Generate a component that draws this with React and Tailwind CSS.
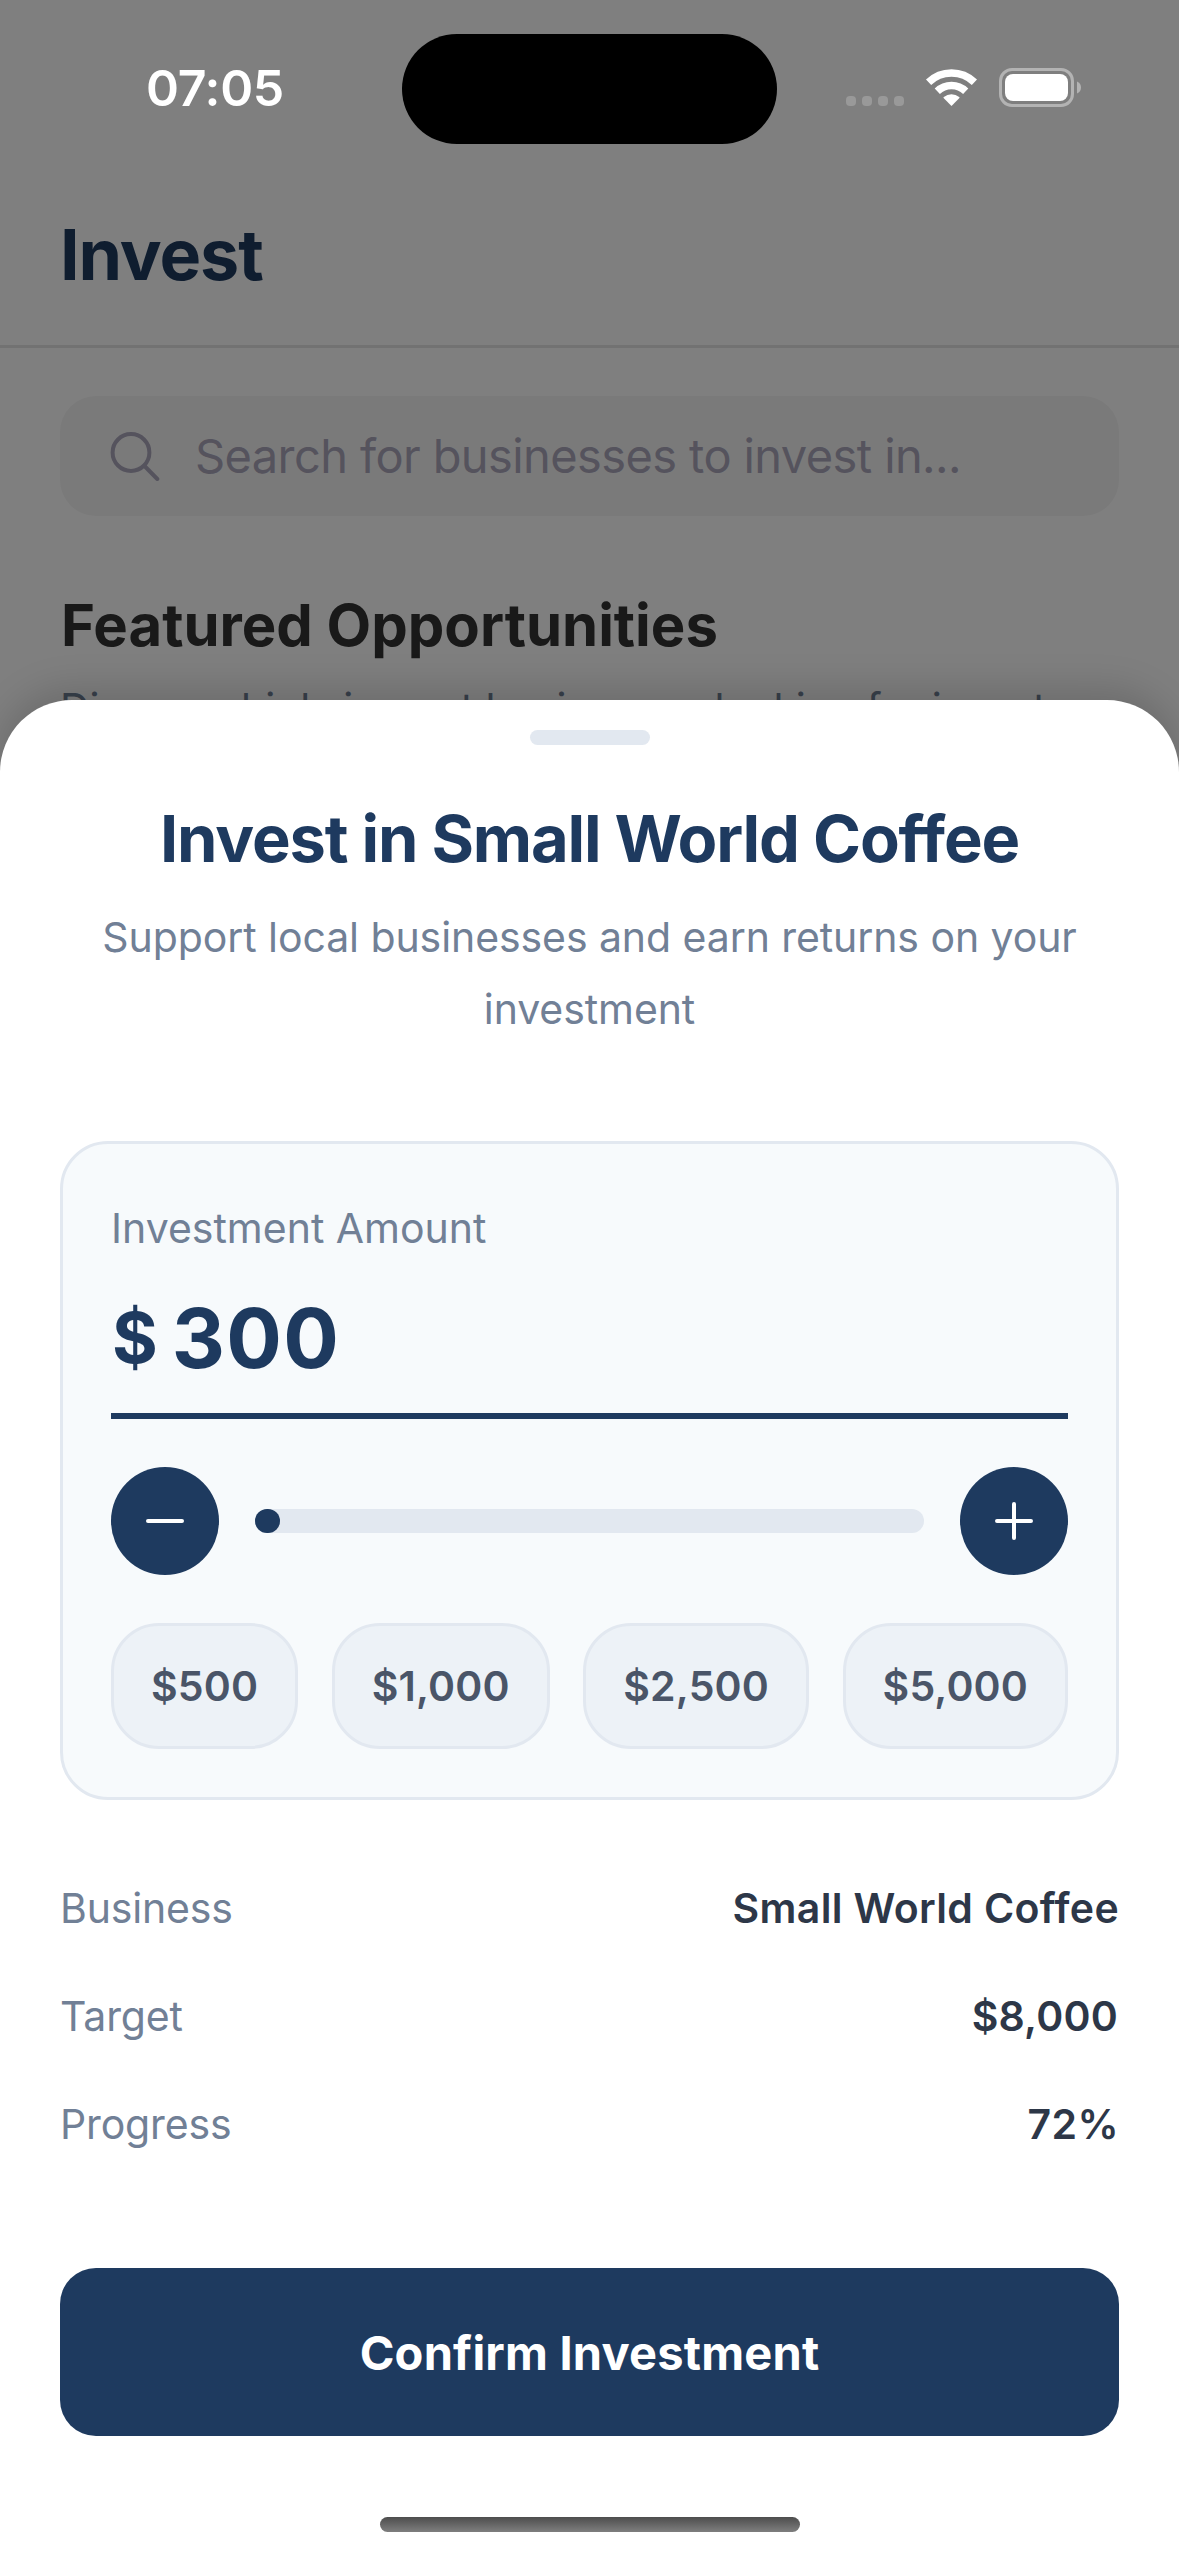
import React, { useState } from 'react';

const QUICK_AMOUNTS = [500, 1000, 2500, 5000];
const MAX_AMOUNT = 8000;
const STEP = 100;

const StatusBar = () => (
  <div className="relative flex h-[177px] items-start justify-between pl-[146px] pr-[98px]">
    <span className="mt-[58px] text-[50px] font-semibold leading-[61px] tracking-[-0.3px] text-white">07:05</span>
    <div className="absolute left-[402px] top-[34px] h-[110px] w-[375px] rounded-full bg-black" />
    <svg width="235" height="39" viewBox="0 0 235 39" fill="none" className="mt-[68px]">
      <g fill="#999999">
        <rect x="0" y="28" width="10" height="10" rx="4" />
        <rect x="16" y="28" width="10" height="10" rx="4" />
        <rect x="32" y="28" width="10" height="10" rx="4" />
        <rect x="48" y="28" width="10" height="10" rx="4" />
      </g>
      <g stroke="white" strokeWidth="7.5">
        <path d="M82.6 14.3A33 33 0 0 1 128.4 14.3" />
        <path d="M91.3 23.3A20.5 20.5 0 0 1 119.7 23.3" />
      </g>
      <path d="M105.5 38L97.6 30Q97.2 29.4 97.8 28.9A12.5 12.5 0 0 1 113.2 28.9Q113.8 29.4 113.4 30Z" fill="white" />
      <rect x="154.5" y="1.5" width="72" height="36" rx="11.5" stroke="#b3b3b3" strokeWidth="3" />
      <rect x="159" y="6" width="63" height="27" rx="8" fill="white" />
      <path d="M231 13.5C233.5 14.5 235 16.8 235 19.5C235 22.2 233.5 24.5 231 25.5Z" fill="#b3b3b3" />
    </svg>
  </div>
);

const SearchIcon = () => (
  <svg width="50" height="50" viewBox="0 0 50 50" fill="none" stroke="#aaa6bb" strokeWidth="4" strokeLinecap="round">
    <circle cx="21" cy="21.5" r="18.4" />
    <path d="M34.5 35L47.3 48" />
  </svg>
);

const RoundButton = ({ onClick, label, children }) => (
  <button
    type="button"
    aria-label={label}
    onClick={onClick}
    className="flex h-[108px] w-[108px] items-center justify-center rounded-full bg-[#1e3a5f]"
  >
    <svg width="40" height="40" viewBox="0 0 40 40" stroke="white" strokeWidth="4" strokeLinecap="round">
      {children}
    </svg>
  </button>
);

const DetailRow = ({ label, value, valueClass }) => (
  <div className="flex h-[108px] items-center justify-between pt-0.5 text-[41px]">
    <span className="tracking-[-0.15px] text-[#718096]">{label}</span>
    <span className={`font-semibold text-[#2d3748] ${valueClass}`}>{value}</span>
  </div>
);

const InvestScreen = () => (
  <div className="h-[2556px] bg-white pt-[177px]">
    <div className="h-[171px] border-b-3 border-[#e5e5e5] px-[60px] pt-[39px]">
      <h1 className="text-[70px] font-bold leading-[78px] tracking-[-1.1px] text-[#1e3a5f]">Invest</h1>
    </div>
    <div className="px-[60px] pt-12">
      <div className="flex h-[120px] items-center gap-[35px] rounded-[36px] bg-[#f5f5f5] pl-[50px]">
        <SearchIcon />
        <span className="whitespace-nowrap text-[47px] tracking-[-0.6px] text-[#aaa6bb]">
          Search for businesses to invest in...
        </span>
      </div>
      <h2 className="mt-[73px] pl-px text-[58px] font-bold leading-[72px] text-[#333333]">Featured Opportunities</h2>
      <p className="mt-[17px] whitespace-nowrap text-[41px] leading-[60px] tracking-[-0.05px] text-[#718096]">
        Discover high-impact businesses looking for investors
      </p>
    </div>
  </div>
);

const App = () => {
  const [amount, setAmount] = useState(300);
  const changeBy = (delta) => setAmount((prev) => Math.min(MAX_AMOUNT, Math.max(STEP, prev + delta)));

  return (
    <div className="relative h-[2556px] w-[1179px] overflow-hidden font-['Inter',sans-serif]">
      <InvestScreen />
      <div className="absolute inset-0 bg-black/50" />
      <div className="absolute inset-x-0 top-0">
        <StatusBar />
      </div>

      {/* Bottom sheet */}
      <div className="absolute inset-x-0 bottom-0 h-[1856px] rounded-t-[72px] bg-white px-[60px] pt-[30px] shadow-[0_-12px_36px_rgba(0,0,0,0.15)]">
        <div className="mx-auto h-[15px] w-[120px] rounded-full bg-[#e2e8f0]" />
        <h2 className="mt-[54px] text-center text-[65px] font-bold leading-[80px] tracking-[-1.18px] text-[#1e3a5f]">
          Invest in Small World Coffee
        </h2>
        <p className="mt-[22px] text-center text-[41px] leading-[72px] tracking-[-0.08px] text-[#718096]">
          Support local businesses and earn returns on your investment
        </p>

        <div className="mt-24 rounded-[48px] border-3 border-[#e2e8f0] bg-[#f7fafc] px-12 pb-12 pt-[54px]">
          <div className="text-[41px] leading-[60px] text-[#718096]">Investment Amount</div>
          <div className="flex h-[161px] items-center gap-[14px] border-b-6 border-[#1e3a5f] pl-px pt-1 font-bold text-[#1e3a5f]">
            <span className="text-[70px] leading-[90px]">$</span>
            <span className="text-[82.5px] leading-[100px] tracking-[1.2px]">{amount}</span>
          </div>

          <div className="mt-12 flex items-center gap-9">
            <RoundButton label="Decrease" onClick={() => changeBy(-STEP)}>
              <path d="M3 20H37" />
            </RoundButton>
            <div className="h-6 flex-1 rounded-full bg-[#e2e8f0]">
              <div
                className="h-6 min-w-[25px] rounded-full bg-[#1e3a5f]"
                style={{ width: `${(amount / MAX_AMOUNT) * 100}%` }}
              />
            </div>
            <RoundButton label="Increase" onClick={() => changeBy(STEP)}>
              <path d="M3 20H37M20 3V37" />
            </RoundButton>
          </div>

          <div className="mt-12 flex justify-between">
            {QUICK_AMOUNTS.map((value) => (
              <button
                key={value}
                type="button"
                onClick={() => setAmount(value)}
                className="h-[126px] rounded-[48px] border-3 border-[#e2e8f0] bg-[#edf2f7] px-[37px] pt-0.5 text-[41px] font-semibold tracking-[0.15px] text-[#4a5568]"
              >
                ${value.toLocaleString('en-US')}
              </button>
            ))}
          </div>
        </div>

        <div className="mt-[54px]">
          <DetailRow label="Business" value="Small World Coffee" valueClass="tracking-[0.36px]" />
          <DetailRow label="Target" value="$8,000" valueClass="pr-px tracking-[0.2px]" />
          <DetailRow label="Progress" value="72%" valueClass="tracking-[0.4px]" />
        </div>

        <button
          type="button"
          className="mt-[90px] flex h-[168px] w-full items-center justify-center rounded-[36px] bg-[#1e3a5f] pt-0.5 text-[47px] font-bold tracking-[0.2px] text-white"
        >
          Confirm Investment
        </button>
        <div className="mx-auto mt-[81px] h-[15px] w-[420px] rounded-full bg-linear-to-b from-[#4d4d4d] to-[#7f7f7f]" />
      </div>
    </div>
  );
};

export default App;
